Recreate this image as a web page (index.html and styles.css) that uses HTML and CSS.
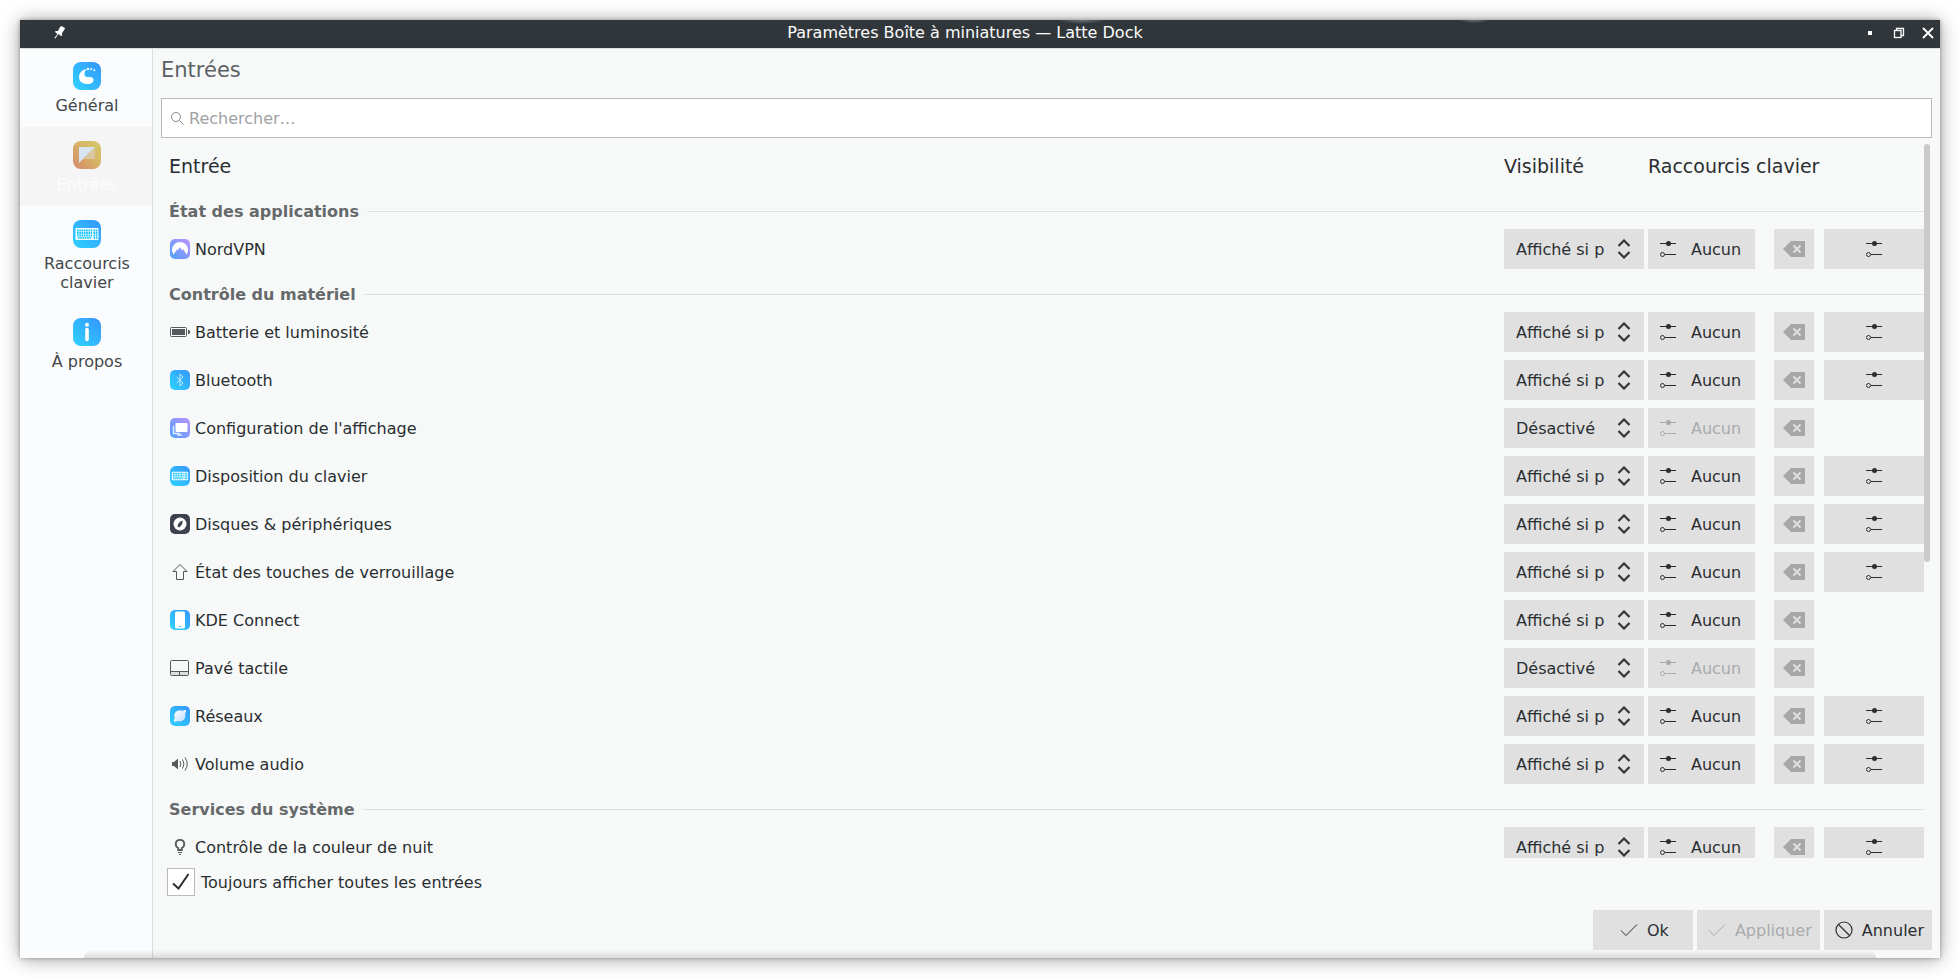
FILE: index.html
```html
<!DOCTYPE html>
<html lang="fr">
<head>
<meta charset="utf-8">
<title>Paramètres Boîte à miniatures — Latte Dock</title>
<link rel="stylesheet" href="styles.css">
</head>
<body>
<svg class="defs" width="0" height="0" aria-hidden="true">
  <defs>
    <linearGradient id="g-blue" x1="0" y1="1" x2="1" y2="0"><stop offset="0" stop-color="#2fd3fd"/><stop offset="1" stop-color="#3496fe"/></linearGradient>
    <linearGradient id="g-gold" x1="0" y1="1" x2="1" y2="0"><stop offset="0" stop-color="#d5876a"/><stop offset=".6" stop-color="#d6b766"/><stop offset="1" stop-color="#d3ca66"/></linearGradient>
    <linearGradient id="g-violet" x1="0" y1="1" x2="1" y2="0"><stop offset="0" stop-color="#4fa0ff"/><stop offset="1" stop-color="#bd93fd"/></linearGradient>
    <linearGradient id="g-planet" x1="0" y1="0" x2="1" y2="1"><stop offset="0" stop-color="#fff"/><stop offset="1" stop-color="#bfdcfb"/></linearGradient>
  </defs>
  <symbol id="sliders" viewBox="0 0 18 18"><path d="M1 3.500h16M6 14.500h11" stroke="currentColor"/><circle cx="9.500" cy="3.500" r="2.500" fill="currentColor"/><circle cx="3.500" cy="14.500" r="2" fill="none" stroke="currentColor"/></symbol>
  <symbol id="clear" viewBox="0 0 22 16"><path d="M0 8l8-8h14v16H8z" fill="#a5a7a8"/><path d="M10.500 4.500l7 7m0-7l-7 7" stroke="#e0e0e0" stroke-width="2"/></symbol>
  <symbol id="arrows" viewBox="0 0 14 20"><path d="M1.500 7L7 1.500 12.500 7M1.500 13L7 18.500 12.500 13" fill="none" stroke="#33373a" stroke-width="2.200"/></symbol>
  <symbol id="check" viewBox="0 0 18 18"><path d="M1 9.500l5 5L17 3.500" fill="none" stroke="currentColor"/></symbol>
  <symbol id="keyboard" viewBox="0 0 28 28"><rect width="28" height="28" rx="8" fill="url(#g-blue)"/><rect x="2.500" y="8" width="23" height="12" rx="1" fill="#f4fcff"/><path d="M4 10.500h15M4 13h15M4 15.500h15M5 17.800h13M20.500 10.500h4M20.500 13h4M20.500 15.500h4M20.500 17.800h4" stroke="#12c4fb" stroke-width="1.800" stroke-dasharray="1.600 .7"/></symbol>
</svg>

<div class="window">
  <header class="titlebar">
    <button class="tb-btn pin" aria-label="Épingler"><svg width="12" height="14" viewBox="0 0 12 14"><path d="M6 1l1.500-1L11 2l-.5 1.500L8 7l.3 2.500-1.300.5-2.500-2L1.200 12.500.3 12 3.500 8 1 6l.5-1L4 5z" fill="#fff"/></svg></button>
    <h1 class="title">Paramètres Boîte à miniatures — Latte Dock</h1>
    <div class="tb-right">
      <button class="tb-btn" aria-label="Réduire"><svg width="4" height="4" viewBox="0 0 4 4"><path d="M0 0h4v4H0z" fill="#fff"/></svg></button>
      <button class="tb-btn" aria-label="Restaurer"><svg width="12" height="12" viewBox="0 0 12 12" fill="none" stroke="#fff" stroke-width="1.300"><path d="M3.500 3V1.500h7v7H8"/><rect x="1.500" y="3.500" width="6.500" height="7"/></svg></button>
      <button class="tb-btn" aria-label="Fermer"><svg width="12" height="12" viewBox="0 0 12 12"><path d="M1 1l10 10M11 1L1 11" stroke="#fff" stroke-width="1.800"/></svg></button>
    </div>
  </header>

  <div class="content">
    <nav class="sidebar">
      <a class="nav-item" href="#general"><svg class="nav-icon" viewBox="0 0 28 28"><rect width="28" height="28" rx="8" fill="url(#g-blue)"/><path d="M12.800 7.200C8.300 8 6 11.800 6 15c0 4.500 3.500 7 8.500 7 4 0 6-2 6-4 0-2-1.500-3-3.700-3-1.700 0-3.300.5-4.600-1-1.400-1.600-.6-5 1.300-6.300.2-.3 0-.6-.7-.5z" fill="#fff"/><circle cx="15" cy="7" r="1.200" fill="#fff"/><circle cx="18.200" cy="7" r="1" fill="#fff"/><circle cx="21.300" cy="8.200" r="1" fill="#fff"/></svg><span>Général</span></a>
      <a class="nav-item active" href="#entrees"><svg class="nav-icon" viewBox="0 0 28 28"><rect width="28" height="28" rx="8" fill="url(#g-gold)"/><path d="M22 6v12H11z" fill="#d8c7a0"/><path d="M6 6h16L6 22z" fill="#d9e4f3"/></svg><span>Entrées</span></a>
      <a class="nav-item" href="#raccourcis"><svg class="nav-icon"><use href="#keyboard"/></svg><span>Raccourcis clavier</span></a>
      <a class="nav-item" href="#apropos"><svg class="nav-icon" viewBox="0 0 28 28"><rect width="28" height="28" rx="8" fill="url(#g-blue)"/><circle cx="14" cy="6.800" r="2" fill="#fff"/><path d="M14 11.500v10" stroke="#fff" stroke-width="3.600" stroke-linecap="round"/></svg><span>À propos</span></a>
    </nav>

    <main class="page">
      <h2 class="page-title">Entrées</h2>
      <label class="search"><svg width="14" height="14" viewBox="0 0 14 14" fill="none" stroke="#888"><circle cx="6" cy="6" r="4.500"/><path d="M9.500 9.500l4 4"/></svg><input type="search" placeholder="Rechercher…" aria-label="Rechercher"></label>

      <div class="list">
        <table class="entries">
          <colgroup><col><col class="c-vis"><col class="c-key"><col class="c-clear"><col class="c-conf"></colgroup>
          <thead><tr><th scope="col">Entrée</th><th scope="col">Visibilité</th><th scope="col" colspan="3">Raccourcis clavier</th></tr></thead>
          <tbody>
            <tr class="section"><th colspan="5"><div>État des applications</div></th></tr>
            <tr><td><div class="entry"><svg viewBox="0 0 20 20"><rect width="20" height="20" rx="5" fill="url(#g-violet)"/><path d="M3.500 15.500A8 8 0 0 1 2 11a8 8 0 0 1 16 0c0 1.700-.6 3.200-1.500 4.500L13 10l-1.200 1.500L10 8l-2.200 3.500L7 10.500z" fill="#fff"/></svg>NordVPN</div></td><td><div class="select"><select aria-label="Visibilité de NordVPN"><option>Affiché si p</option></select><svg><use href="#arrows"/></svg></div></td><td><button class="btn key"><svg><use href="#sliders"/></svg>Aucun</button></td><td><button class="btn clear" aria-label="Effacer"><svg><use href="#clear"/></svg></button></td><td><button class="btn conf" aria-label="Configurer"><svg><use href="#sliders"/></svg></button></td></tr>
          </tbody>
          <tbody>
            <tr class="section"><th colspan="5"><div>Contrôle du matériel</div></th></tr>
            <tr><td><div class="entry"><svg viewBox="0 0 20 20"><rect x=".5" y="5.500" width="16" height="9" rx="1" fill="none" stroke="#55595b"/><path d="M2 7h13v6H2zM18 8h1l1 1v2l-1 1h-1z" fill="#55595b"/></svg>Batterie et luminosité</div></td><td><div class="select"><select aria-label="Visibilité de Batterie et luminosité"><option>Affiché si p</option></select><svg><use href="#arrows"/></svg></div></td><td><button class="btn key"><svg><use href="#sliders"/></svg>Aucun</button></td><td><button class="btn clear" aria-label="Effacer"><svg><use href="#clear"/></svg></button></td><td><button class="btn conf" aria-label="Configurer"><svg><use href="#sliders"/></svg></button></td></tr>
            <tr><td><div class="entry"><svg viewBox="0 0 20 20"><rect width="20" height="20" rx="5" fill="url(#g-blue)"/><path d="M6.500 7l6.500 6-3 3V4l3 3-6.500 6" fill="none" stroke="#c2ebff"/></svg>Bluetooth</div></td><td><div class="select"><select aria-label="Visibilité de Bluetooth"><option>Affiché si p</option></select><svg><use href="#arrows"/></svg></div></td><td><button class="btn key"><svg><use href="#sliders"/></svg>Aucun</button></td><td><button class="btn clear" aria-label="Effacer"><svg><use href="#clear"/></svg></button></td><td><button class="btn conf" aria-label="Configurer"><svg><use href="#sliders"/></svg></button></td></tr>
            <tr><td><div class="entry"><svg viewBox="0 0 20 20"><rect width="20" height="20" rx="5" fill="url(#g-violet)"/><rect x="5.500" y="5" width="12" height="9" rx="1" fill="#fff"/><path d="M3.500 8v7.500H10M7 17h5" fill="none" stroke="#dcecff" stroke-width="1.500"/></svg>Configuration de l'affichage</div></td><td><div class="select"><select aria-label="Visibilité de Configuration de l'affichage"><option>Désactivé</option></select><svg><use href="#arrows"/></svg></div></td><td><button class="btn key" disabled><svg><use href="#sliders"/></svg>Aucun</button></td><td><button class="btn clear" aria-label="Effacer"><svg><use href="#clear"/></svg></button></td><td></td></tr>
            <tr><td><div class="entry"><svg><use href="#keyboard"/></svg>Disposition du clavier</div></td><td><div class="select"><select aria-label="Visibilité de Disposition du clavier"><option>Affiché si p</option></select><svg><use href="#arrows"/></svg></div></td><td><button class="btn key"><svg><use href="#sliders"/></svg>Aucun</button></td><td><button class="btn clear" aria-label="Effacer"><svg><use href="#clear"/></svg></button></td><td><button class="btn conf" aria-label="Configurer"><svg><use href="#sliders"/></svg></button></td></tr>
            <tr><td><div class="entry"><svg viewBox="0 0 20 20"><rect width="20" height="20" rx="5" fill="#3b4150"/><circle cx="10" cy="10" r="6.500" fill="#fff"/><path d="M12.500 6.500c.5 2-.5 5-3.500 7l-1.500-1c0-2.500 2-5 5-6z" fill="#3b4150"/></svg>Disques &amp; périphériques</div></td><td><div class="select"><select aria-label="Visibilité de Disques et périphériques"><option>Affiché si p</option></select><svg><use href="#arrows"/></svg></div></td><td><button class="btn key"><svg><use href="#sliders"/></svg>Aucun</button></td><td><button class="btn clear" aria-label="Effacer"><svg><use href="#clear"/></svg></button></td><td><button class="btn conf" aria-label="Configurer"><svg><use href="#sliders"/></svg></button></td></tr>
            <tr><td><div class="entry"><svg viewBox="0 0 20 20"><path d="M10 2.500L3 9.500h3.500v8h7v-8H17z" fill="none" stroke="#55595b"/></svg>État des touches de verrouillage</div></td><td><div class="select"><select aria-label="Visibilité de État des touches de verrouillage"><option>Affiché si p</option></select><svg><use href="#arrows"/></svg></div></td><td><button class="btn key"><svg><use href="#sliders"/></svg>Aucun</button></td><td><button class="btn clear" aria-label="Effacer"><svg><use href="#clear"/></svg></button></td><td><button class="btn conf" aria-label="Configurer"><svg><use href="#sliders"/></svg></button></td></tr>
            <tr><td><div class="entry"><svg viewBox="0 0 20 20"><rect width="20" height="20" rx="5" fill="url(#g-blue)"/><rect x="5" y="1.500" width="10" height="17" rx="1.500" fill="#fff"/><path d="M9 16.500h2" stroke="#58b8fd"/></svg>KDE Connect</div></td><td><div class="select"><select aria-label="Visibilité de KDE Connect"><option>Affiché si p</option></select><svg><use href="#arrows"/></svg></div></td><td><button class="btn key"><svg><use href="#sliders"/></svg>Aucun</button></td><td><button class="btn clear" aria-label="Effacer"><svg><use href="#clear"/></svg></button></td><td></td></tr>
            <tr><td><div class="entry"><svg viewBox="0 0 20 20"><path d="M1 14h17v3H1z" fill="#dcdddd"/><path d="M.5 13.500h18M9.500 13.500v4" stroke="#55595b"/><rect x=".5" y="2.500" width="18" height="15" rx="1" fill="none" stroke="#55595b"/></svg>Pavé tactile</div></td><td><div class="select"><select aria-label="Visibilité de Pavé tactile"><option>Désactivé</option></select><svg><use href="#arrows"/></svg></div></td><td><button class="btn key" disabled><svg><use href="#sliders"/></svg>Aucun</button></td><td><button class="btn clear" aria-label="Effacer"><svg><use href="#clear"/></svg></button></td><td></td></tr>
            <tr><td><div class="entry"><svg viewBox="0 0 20 20"><rect width="20" height="20" rx="5" fill="url(#g-blue)"/><circle cx="9.800" cy="9.800" r="5.600" fill="url(#g-planet)"/><path d="M12 4.700c2-.9 3.500-1 3.900-.5.500.6 0 2-.8 3.600M4.800 12c-.9 1.800-1.200 3-.8 3.500.6.600 2.200.1 4-.7" fill="#e6f3ff"/></svg>Réseaux</div></td><td><div class="select"><select aria-label="Visibilité de Réseaux"><option>Affiché si p</option></select><svg><use href="#arrows"/></svg></div></td><td><button class="btn key"><svg><use href="#sliders"/></svg>Aucun</button></td><td><button class="btn clear" aria-label="Effacer"><svg><use href="#clear"/></svg></button></td><td><button class="btn conf" aria-label="Configurer"><svg><use href="#sliders"/></svg></button></td></tr>
            <tr><td><div class="entry"><svg viewBox="0 0 20 20"><path d="M2 8h2l4-3.500v11L4 12H2z" fill="#55595b"/><path d="M10 7q1.800 3 0 6M12.500 5.500q3 4.500 0 9M15 3.500q4.500 6.500 0 13" fill="none" stroke="#55595b"/></svg>Volume audio</div></td><td><div class="select"><select aria-label="Visibilité de Volume audio"><option>Affiché si p</option></select><svg><use href="#arrows"/></svg></div></td><td><button class="btn key"><svg><use href="#sliders"/></svg>Aucun</button></td><td><button class="btn clear" aria-label="Effacer"><svg><use href="#clear"/></svg></button></td><td><button class="btn conf" aria-label="Configurer"><svg><use href="#sliders"/></svg></button></td></tr>
          </tbody>
          <tbody>
            <tr class="section"><th colspan="5"><div>Services du système</div></th></tr>
            <tr><td><div class="entry"><svg viewBox="0 0 20 20"><path d="M8.200 13v-2C4.500 9 5 2.800 10 2.800S15.500 9 11.800 11v2z" fill="none" stroke="#55595b" stroke-width="1.800"/><path d="M8 15.500h4M9 17.500h2" stroke="#55595b"/></svg>Contrôle de la couleur de nuit</div></td><td><div class="select"><select aria-label="Visibilité de Contrôle de la couleur de nuit"><option>Affiché si p</option></select><svg><use href="#arrows"/></svg></div></td><td><button class="btn key"><svg><use href="#sliders"/></svg>Aucun</button></td><td><button class="btn clear" aria-label="Effacer"><svg><use href="#clear"/></svg></button></td><td><button class="btn conf" aria-label="Configurer"><svg><use href="#sliders"/></svg></button></td></tr>
          </tbody>
        </table>
        <div class="scroll-thumb"></div>
      </div>

      <label class="always"><span class="box"><input type="checkbox" checked><svg width="18" height="18" viewBox="0 0 18 18"><path d="M1 10.500l5.500 5L16.500 1" fill="none" stroke="#2b2f31" stroke-width="2"/></svg></span>Toujours afficher toutes les entrées</label>

      <footer class="actions">
        <button class="btn ok"><svg><use href="#check"/></svg>Ok</button>
        <button class="btn apply" disabled><svg><use href="#check"/></svg>Appliquer</button>
        <button class="btn cancel"><svg viewBox="0 0 18 18"><circle cx="9" cy="9" r="8" fill="none" stroke="currentColor" stroke-width="1.200"/><path d="M3.500 3.500l11 11" stroke="currentColor" stroke-width="1.200"/></svg>Annuler</button>
      </footer>
    </main>
  </div>
</div>
</body>
</html>
```
FILE: styles.css
```css
* { box-sizing: border-box; }
body {
  margin: 0;
  height: 100vh;
  padding: 20px;
  background: #fff;
  color: #2a2e31;
  font: 16px/19px "DejaVu Sans", sans-serif;
  overflow: hidden;
}
.defs { position: absolute; }
svg { display: block; flex: none; }
button, input, select { font: inherit; color: inherit; border: 0; margin: 0; }
h1, h2 { margin: 0; font-weight: 400; }

.window {
  position: relative;
  height: 100%;
  display: flex;
  flex-direction: column;
  background: #f7f9f8;
  box-shadow: 0 1px 18px rgba(0, 0, 0, .38), 0 0 4px rgba(0, 0, 0, .3);
}
.window::after {
  content: "";
  position: absolute;
  left: 64px;
  right: 64px;
  bottom: 0;
  height: 8px;
  border-radius: 16px 16px 0 0;
  background: linear-gradient(transparent, rgba(0, 0, 0, .12));
  pointer-events: none;
}

.titlebar {
  position: relative;
  z-index: 1;
  flex: none;
  height: 28px;
  display: flex;
  align-items: center;
  gap: 6px;
  padding: 0 6px 3px 34px;
  background:
    radial-gradient(ellipse 24px 4px at 1062px 0, rgba(255, 255, 255, .3), transparent),
    radial-gradient(ellipse 16px 3px at 1454px 0, rgba(255, 255, 255, .3), transparent),
    #31363a;
  box-shadow: 0 1px #dfe1e1;
}
.title { flex: 1; font-size: 16px; text-align: center; color: #fcfcfc; }
.tb-right { display: flex; justify-content: flex-end; gap: 17px; }
.tb-btn {
  width: 12px;
  height: 14px;
  padding: 0;
  background: none;
  display: grid;
  place-items: center;
}

.content { flex: 1; min-height: 0; display: flex; }
.sidebar {
  flex: none;
  width: 133px;
  background: #fbfcfe;
  border-right: 1px solid #dbdddf;
}
.nav-item {
  display: flex;
  flex-direction: column;
  align-items: center;
  gap: 6px;
  padding: 14px 12px 12px 14px;
  text-align: center;
  text-decoration: none;
  color: #43474a;
}
.nav-item.active { background: #f5f5f5; color: #fdfdfd; }
.nav-icon { width: 28px; height: 28px; }

.page {
  flex: 1;
  min-width: 0;
  display: flex;
  flex-direction: column;
  padding: 8px;
}
.page-title {
  font-size: 21px;
  line-height: 28px;
  color: #5d6164;
  margin-bottom: 14px;
}
.search {
  flex: none;
  height: 40px;
  display: flex;
  align-items: center;
  gap: 5px;
  padding: 0 8px;
  background: #fff;
  border: 1px solid #b9b9b9;
}
.search input { flex: 1; padding: 0; background: none; outline: 0; }
.search input::placeholder { color: #a0a1a2; opacity: 1; }

.list {
  position: relative;
  flex: 1;
  min-height: 0;
  margin-top: 5px;
  padding: 0 8px;
  overflow: hidden;
}
.scroll-thumb {
  position: absolute;
  top: 1px;
  right: 2px;
  width: 6px;
  height: 58.500%;
  border-radius: 3px;
  background: #cacaca;
}
.entries { width: 100%; table-layout: fixed; border-collapse: collapse; }
.entries th, .entries td { padding: 0; text-align: left; }
.c-vis { width: 144px; }
.c-key { width: 126px; }
.c-clear { width: 50px; }
.c-conf { width: 100px; }
.entries thead th { height: 47px; font-size: 19px; font-weight: 400; }
.section div {
  display: flex;
  align-items: center;
  gap: 8px;
  padding: 12px 0 4px;
  color: #66696b;
}
.section div::after { content: ""; flex: 1; height: 1px; background: #dfe1e1; }
.entries td { height: 48px; }
.entry { display: flex; align-items: center; gap: 5px; padding-left: 1px; }
.entry svg { width: 20px; height: 20px; }

.select { position: relative; width: 140px; }
.select select {
  display: block;
  width: 100%;
  height: 40px;
  padding: 0 36px 0 12px;
  border-radius: 0;
  background: #e0e0e0;
  appearance: none;
}
.select svg {
  position: absolute;
  right: 13px;
  top: 10px;
  width: 14px;
  height: 20px;
  pointer-events: none;
}
.btn {
  height: 40px;
  padding: 0;
  display: flex;
  align-items: center;
  justify-content: center;
  background: #e0e0e0;
  white-space: nowrap;
}
.btn svg { width: 18px; height: 18px; }
.btn:disabled { color: #a9abac; }
.key { width: 107px; justify-content: flex-start; gap: 14px; padding-left: 11px; }
.clear { width: 40px; }
.clear svg { width: 22px; height: 16px; }
.conf { width: 100%; }

.always {
  align-self: flex-start;
  display: flex;
  align-items: center;
  gap: 6px;
  margin: 10px 0 14px 6px;
}
.box { position: relative; width: 28px; height: 28px; display: grid; place-items: center; }
.box input {
  grid-area: 1 / 1;
  width: 28px;
  height: 28px;
  appearance: none;
  background: #fff;
  border: 1px solid #b9b9b9;
}
.box svg { grid-area: 1 / 1; z-index: 1; pointer-events: none; }
.box input:not(:checked) + svg { visibility: hidden; }

.actions { display: flex; justify-content: flex-end; gap: 4px; }
.actions .btn { gap: 9px; padding: 0 8px 0 11px; }
.actions .ok { width: 100px; }
```
